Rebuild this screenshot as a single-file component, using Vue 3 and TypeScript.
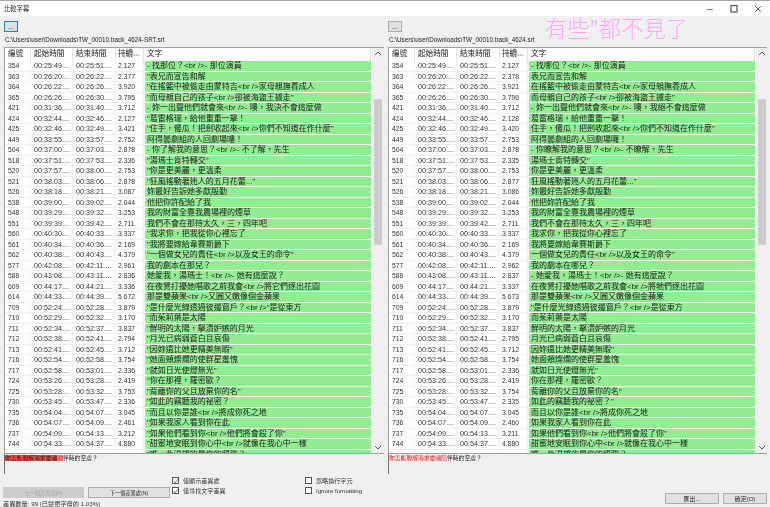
<script setup lang="ts">
type Row = [string, string, string, string, string]

const leftRows: Row[] = [
  ['354', '00:25:49....', '00:25:51....', '2.127', '- 找那位？<br />- 那位演員'],
  ['363', '00:26:20....', '00:26:22....', '2.377', '"表兄而宣告和解'],
  ['364', '00:26:22....', '00:26:26....', '3.920', '"在搖籃中被偷走由蒙特吉<br />家母親撫養成人'],
  ['365', '00:26:26....', '00:26:30....', '3.795', '"而母親自己的孩子<br />卻被海盜王擄走"'],
  ['421', '00:31:36....', '00:31:40....', '3.712', '- 妳一出聲他們就會來<br />- 噢，我決不會這麼做'],
  ['424', '00:32:44....', '00:32:46....', '2.127', '"葛雷格瑞，給他重重一擊！'],
  ['425', '00:32:46....', '00:32:49....', '3.421', '"住手，傻瓜！把劍收起來<br />你們不知道在作什麼"'],
  ['449', '00:33:55....', '00:33:57....', '2.752', '阿得曇劇組的人回劇場嘍！'],
  ['504', '00:37:00....', '00:37:03....', '2.878', '- 你了解我的意思？<br />- 不了解，先生'],
  ['518', '00:37:51....', '00:37:53....', '2.336', '"湯瑪士肯特轉交"'],
  ['520', '00:37:57....', '00:38:00....', '2.753', '"你是更美麗，更溫柔'],
  ['521', '00:38:03....', '00:38:06....', '2.878', '"狂風搖動著迷人的五月花蕾..."'],
  ['526', '00:38:18....', '00:38:21....', '3.087', '妳最好告訴她多獻殷勤'],
  ['538', '00:39:00....', '00:39:02....', '2.044', '他把你許配給了我'],
  ['548', '00:39:29....', '00:39:32....', '3.253', '我的財富全靠我農場裡的煙草'],
  ['551', '00:39:39....', '00:39:42....', '2.711', '我們不會在那待太久，三，四年吧'],
  ['560', '00:40:30....', '00:40:33....', '3.337', '"我求你，把我從你心裡忘了'],
  ['561', '00:40:34....', '00:40:36....', '2.169', '"我將要嫁給韋賽斯爵下'],
  ['562', '00:40:38....', '00:40:43....', '4.379', '"一個做女兒的責任<br />以及女王的命令"'],
  ['577', '00:42:08....', '00:42:11....', '2.961', '我的劇本在那兒？'],
  ['588', '00:43:08....', '00:43:11....', '2.836', '她愛我，湯瑪士！<br />- 她有這麼說？'],
  ['609', '00:44:17....', '00:44:21....', '3.336', '在夜鶯打擾她唱歌之前我會<br />將它們逐出花園'],
  ['614', '00:44:33....', '00:44:39....', '5.672', '那是雙蘋果<br />又圓又嫩像個金蘋果'],
  ['709', '00:52:24....', '00:52:28....', '3.879', '"是什麼光線透過彼邊窗戶？<br />"是從東方'],
  ['710', '00:52:29....', '00:52:32....', '3.170', '"而茱莉葉是太陽'],
  ['711', '00:52:34....', '00:52:37....', '3.837', '"鮮明的太陽，擊潰妒嫉的月光'],
  ['712', '00:52:38....', '00:52:41....', '2.794', '"月光已病弱蒼白且哀傷'],
  ['713', '00:52:41....', '00:52:45....', '3.712', '"因妳遠比她更精美無暇"'],
  ['716', '00:52:54....', '00:52:58....', '3.754', '"她面頰燦爛的使群星羞愧'],
  ['717', '00:52:58....', '00:53:01....', '2.336', '"就如日光使燈無光"'],
  ['724', '00:53:26....', '00:53:28....', '2.419', '"你在那裡，羅密歐？'],
  ['725', '00:53:28....', '00:53:32....', '3.753', '"背離你的父且放棄你的名"'],
  ['730', '00:53:45....', '00:53:47....', '2.336', '"如此的竊聽我的祕密？'],
  ['735', '00:54:04....', '00:54:07....', '3.045', '"而且以你是誰<br />將成你死之地'],
  ['736', '00:54:07....', '00:54:09....', '2.461', '"如果我家人看到你在此'],
  ['737', '00:54:09....', '00:54:13....', '3.212', '"如果他們看到你<br />他們將會殺了你"'],
  ['744', '00:54:33....', '00:54:37....', '4.880', '"甜蜜地安眠到你心中<br />就像在我心中一樣'],
  ['', '', '', '', '"唯一此渴望的是你的盟誓？'],
]

const rightOverrides: Record<string, [string, string]> = {
  '354': ['2.127', '- 找哪位？<br />- 那位演員'],
  '363': ['2.378', '表兄而宣告和解'],
  '364': ['3.921', '在搖籃中被偷走由蒙特吉<br />家母親撫養成人'],
  '365': ['3.796', '而母親自己的孩子<br />卻被海盜王擄走"'],
  '421': ['3.712', '- 妳一出聲他們就會來<br />- 噢，我絕不會這麼做'],
  '424': ['2.128', '葛雷格瑞，給他重重一擊！'],
  '425': ['3.420', '住手，傻瓜！把劍收起來<br />你們不知道在作什麼"'],
  '449': ['2.753', '阿得曇劇組的人回劇場囉！'],
  '504': ['2.878', '- 你瞭解我的意思？<br />- 不瞭解，先生'],
  '518': ['2.335', '湯瑪士肯特轉交"'],
  '520': ['2.753', '你是更美麗，更溫柔'],
  '521': ['2.877', '狂風搖動著迷人的五月花蕾..."'],
  '526': ['3.086', '妳最好告訴她多獻殷勤'],
  '538': ['2.044', '他把妳許配給了我'],
  '560': ['3.337', '我求你，把我從你心裡忘了'],
  '561': ['2.169', '我將要嫁給韋賽斯爵下'],
  '562': ['4.379', '一個做女兒的責任<br />以及女王的命令"'],
  '577': ['2.962', '我的劇本在哪兒？'],
  '588': ['2.837', '- 她愛我，湯瑪士！<br />- 她有這麼說？'],
  '609': ['3.337', '在夜鶯打擾她唱歌之前我會<br />將牠們逐出花園'],
  '614': ['5.673', '那是雙蘋果<br />又圓又嫩像個金蘋果'],
  '709': ['3.879', '"是什麼光線透過彼邊窗戶？<br />是從東方'],
  '710': ['3.170', '而茱莉葉是太陽'],
  '711': ['3.837', '鮮明的太陽，擊潰妒嫉的月光'],
  '712': ['2.795', '月光已病弱蒼白且哀傷'],
  '713': ['3.712', '因妳遠比她更精美無暇"'],
  '716': ['3.754', '她面頰燦爛的使群星羞愧'],
  '717': ['2.336', '就如日光使燈無光"'],
  '724': ['2.419', '你在那裡，羅密歐？'],
  '725': ['3.754', '背離你的父且放棄你的名"'],
  '730': ['2.335', '如此的竊聽我的祕密？"'],
  '735': ['3.045', '而且以你是誰<br />將成你死之地'],
  '736': ['2.460', '如果我家人看到你在此'],
  '737': ['3.211', '如果他們看到你<br />他們將會殺了你"'],
  '744': ['4.880', '甜蜜地安眠到你心中<br />就像在我心中一樣'],
  '': ['', '唯一此渴望的是你的盟誓？'],
}

const rightRows: Row[] = leftRows.map((r) => {
  const o = rightOverrides[r[0]]
  return o ? [r[0], r[1], r[2], o[0], o[1]] : r
})

const panes = [
  {
    key: 'l',
    path: 'C:\\Users\\user\\Downloads\\TW_00010.track_4624-SRT.srt',
    rows: leftRows,
    focused: true,
  },
  {
    key: 'r',
    path: 'C:\\Users\\user\\Downloads\\TW_00010.track_4624.srt',
    rows: rightRows,
    focused: false,
  },
]
</script>

<template>
  <div class="win">
    <header class="title">
      <span>比較字幕</span>
      <div class="ctrls">
        <svg width="10" height="10" viewBox="0 0 10 10"><path d="M2 5.5h6" stroke="#777" fill="none" /></svg>
        <svg width="10" height="10" viewBox="0 0 10 10"><rect x="2" y="1.5" width="6" height="6.5" stroke="#555" stroke-width="1.2" fill="none" /></svg>
        <svg width="10" height="10" viewBox="0 0 10 10"><path d="M2 2l6 6M8 2l-6 6" stroke="#666" fill="none" /></svg>
      </div>
    </header>

    <div class="note">有些"都不見了</div>

    <main class="panes">
      <section v-for="p in panes" :key="p.key" class="pane" :class="p.key">
        <button class="dots" :class="{ focus: p.focused }">...</button>
        <div class="path">{{ p.path }}</div>
        <div class="list">
          <div class="table">
            <div class="head">
              <span class="c1">編號</span><span class="c2">起始時間</span><span class="c3">結束時間</span><span class="c4">持續...</span><span class="c5">文字</span>
            </div>
            <div class="rows">
              <div v-for="(r, i) in p.rows" :key="i" class="row">
                <span class="c1">{{ r[0] }}</span><span class="c2 tm">{{ r[1] }}</span><span class="c3 tm">{{ r[2] }}</span><span class="c4">{{ r[3] }}</span><span class="c5 txt">{{ r[4] }}</span>
              </div>
            </div>
          </div>
          <div class="sb">
            <svg class="arr" width="8" height="8" viewBox="0 0 8 8"><path d="M1 5l3-3 3 3" fill="none" stroke="#555" /></svg>
            <div class="track"><div class="thumb"></div></div>
            <svg class="arr" width="8" height="8" viewBox="0 0 8 8"><path d="M1 3l3 3 3-3" fill="none" stroke="#555" /></svg>
          </div>
        </div>
        <div class="detail">
          <template v-if="p.key === 'l'"><span class="hl">你怎能瞭解渴求靈魂<span class="pale">陪</span></span>伴時的空虛？</template>
          <template v-else><span class="red">你怎能瞭解渴求靈魂陪</span>伴時的空虛？</template>
        </div>
      </section>
    </main>

    <footer class="foot">
      <div class="navcol">
        <div class="navbtns">
          <button class="btn nav prev" disabled>上一個差異處(P)</button>
          <button class="btn nav next">下一個差異處(N)</button>
        </div>
        <div class="status">差異數量: 99 (已變更字母的 1.03%)</div>
      </div>
      <div class="checks c-a">
        <label class="chk"><i class="box on"><svg width="8" height="8" viewBox="0 0 8 8"><path d="M1 4l2 2.5L7 1" fill="none" stroke="#555" /></svg></i>僅顯示差異處</label>
        <label class="chk"><i class="box on"><svg width="8" height="8" viewBox="0 0 8 8"><path d="M1 4l2 2.5L7 1" fill="none" stroke="#555" /></svg></i>僅尋找文字差異</label>
      </div>
      <div class="checks c-b">
        <label class="chk"><i class="box"></i>忽略換行字元</label>
        <label class="chk"><i class="box"></i>Ignore formatting</label>
      </div>
      <div class="actions">
        <button class="btn export">匯出...</button>
        <button class="btn ok">確定(O)</button>
      </div>
    </footer>
  </div>
</template>

<style>
html, body { margin: 0; background: #f0f0f0; overflow: hidden; }
</style>

<style scoped>
.win {
  position: relative;
  width: 770px;
  height: 507px;
  box-sizing: border-box;
  border-top: 1px solid #a8a8a8;
  background: #f0f0f0;
  color: #222;
  font-family: "Liberation Sans", "Noto Sans CJK TC", sans-serif;
  font-size: 7.6px;
  overflow: hidden;
  filter: blur(0.3px);
}
.title {
  height: 15px;
  background: #fff;
  display: flex;
  align-items: center;
  justify-content: space-between;
  padding-left: 4px;
  font-size: 6.3px;
}
.ctrls { display: flex; gap: 14px; padding-right: 7px; }
.note {
  position: absolute;
  left: 545px;
  top: 12px;
  font-size: 22.3px;
  line-height: 28px;
  color: #ffa8f8;
  font-family: "Noto Sans CJK TC", sans-serif;
  font-weight: 300;
}
.panes { display: flex; }
.pane { width: 385px; box-sizing: border-box; display: flex; flex-direction: column; }
.pane.l { padding: 5px 1px 0 4px; }
.pane.r { padding: 5px 3px 0 3px; }
.dots {
  width: 14px;
  height: 11px;
  padding: 0;
  box-sizing: border-box;
  border: 1px solid #adadad;
  background: #e1e1e1;
  font: 7px "Liberation Sans", sans-serif;
  line-height: 7px;
  color: #222;
}
.dots.focus { border-color: #1f7fd0; box-shadow: inset 0 0 0 1px #cfe3f5; }
.path { height: 15px; line-height: 15px; font-size: 6.3px; color: #222; padding-left: 1px; }
.list {
  display: flex;
  height: 405px;
  background: #fff;
  border-top: 1px solid #a0a0a0;
  border-left: 1px solid #a0a0a0;
  overflow: hidden;
}
.table { width: 366px; flex: none; }
.head { display: flex; height: 13px; line-height: 12px; font-size: 7.6px; color: #222; }
.head span { box-sizing: border-box; padding-left: 3px; border-right: 1px solid #e4e4e4; }
.head .c4 { padding-left: 2px; }
.row { display: flex; height: 10.5px; line-height: 10px; font-size: 6.8px; color: #333; }
.row span { box-sizing: border-box; padding-left: 3px; white-space: nowrap; overflow: hidden; border-right: 1px solid #efefef; border-bottom: 1px solid #efefef; }
.row .c4 { padding-left: 2px; }
.row .tm { font-size: 7.2px; }
.c1 { width: 26px; flex: none; }
.c2 { width: 42px; flex: none; }
.c3 { width: 43px; flex: none; }
.c4 { width: 28px; flex: none; }
.c5 { flex: 1; }
.row .txt {
  background: #90ee90;
  font-size: 8px;
  color: #1c1c1c;
  padding-left: 2px;
  margin-left: 1px;
  border-right: 0;
  border-bottom: 1px solid #fff;
}
.sb { width: 12px; background: #f0f0f0; display: flex; flex-direction: column; align-items: center; margin-left: 1px; }
.arr { height: 12px; flex: none; }
.track { flex: 1; width: 100%; padding-top: 39px; box-sizing: border-box; display: flex; flex-direction: column; align-items: center; }
.thumb { height: 146px; width: 8px; background: #cdcdcd; }
.detail {
  height: 21px;
  border-top: 1px solid #a0a0a0;
  border-left: 1px solid #707070;
  background: #f0f0f0;
  line-height: 9px;
  font-size: 5.8px;
  color: #222;
  box-sizing: border-box;
  white-space: nowrap;
}
.hl { background: #ff4d4d; }
.pale { color: #ff9a9a; }
.red { color: #f01010; }
.foot { position: relative; display: flex; height: 33px; }
.navcol { width: 172px; padding-left: 3px; box-sizing: border-box; padding-top: 13px; }
.navbtns { display: flex; gap: 4px; }
.btn {
  box-sizing: border-box;
  height: 11px;
  padding: 0;
  border: 1px solid #adadad;
  background: #e1e1e1;
  color: #222;
  font: 6px "Liberation Sans", "Noto Sans CJK TC", sans-serif;
  line-height: 8px;
}
.nav { font-size: 5.2px; }
.prev { width: 81px; color: #aaa; background: #ccc; border-color: #ccc; }
.next { width: 82px; }
.status { font-size: 6.2px; margin-top: 1px; color: #333; line-height: 9px; }
.checks { display: flex; flex-direction: column; gap: 3px; padding-top: 3px; }
.c-a { width: 133px; }
.c-b { width: 118px; }
.chk { display: flex; align-items: center; height: 7px; gap: 4px; font-size: 6.1px; color: #333; }
.box {
  display: flex;
  align-items: center;
  justify-content: center;
  width: 7px;
  height: 7px;
  box-sizing: border-box;
  background: #fff;
  border: 1px solid #555;
}
.box svg { width: 6px; height: 6px; flex: none; }
.actions { position: absolute; right: 3px; bottom: 3px; display: flex; gap: 4px; }
.export { width: 54px; }
.ok { width: 44px; }
</style>
